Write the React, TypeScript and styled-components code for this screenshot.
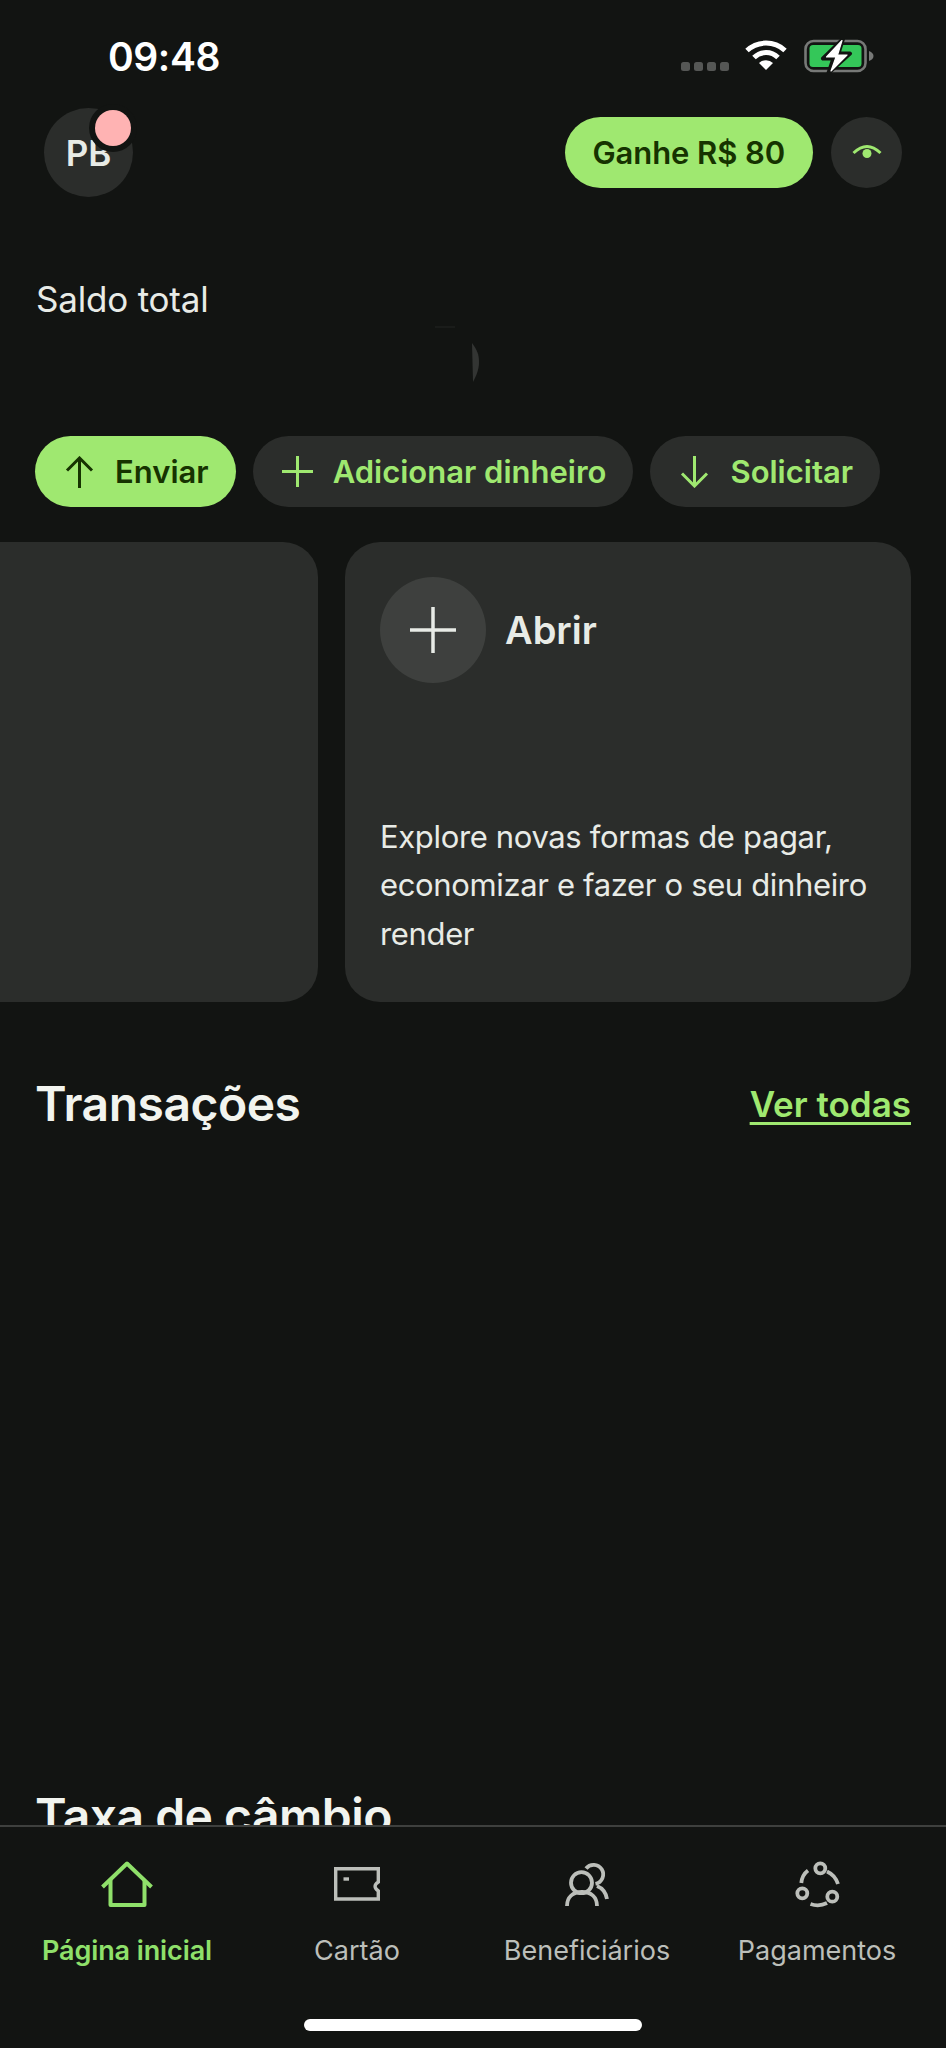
import React from "react";
import styled, { createGlobalStyle } from "styled-components";

const BG = "#121412";
const SURFACE = "#2b2d2b";
const GREEN = "#9fe870";
const GREEN_DARK = "#163300";
const TEXT = "#e8ebe6";
const MUTED = "#bcbfba";

const GlobalStyle = createGlobalStyle`
	html, body {
		margin: 0;
		padding: 0;
		background: ${BG};
	}
	* {
		box-sizing: border-box;
	}
`;

const Page = styled.div`
	width: 946px;
	height: 2048px;
	display: flex;
	flex-direction: column;
	overflow: hidden;
	background: ${BG};
	font-family: Inter, "Liberation Sans", sans-serif;
	color: ${TEXT};
`;

const StatusBar = styled.div`
	height: 108px;
	flex: none;
	display: flex;
	align-items: flex-start;
	justify-content: space-between;
	padding: 33px 72px 0 108px;
`;

const Clock = styled.div`
	font-size: 39px;
	line-height: 47px;
	font-weight: 600;
	letter-spacing: -0.4px;
	color: #fff;
`;

const StatusIcons = styled.div`
	display: flex;
	align-items: flex-start;
	margin-top: 6px;
`;

const SignalDots = styled.div`
	display: flex;
	gap: 4px;
	margin: 23px 16px 0 0;
`;

const SignalDot = styled.span`
	width: 9px;
	height: 9px;
	border-radius: 2.5px;
	background: #555755;
`;

const Header = styled.header`
	flex: none;
	display: flex;
	align-items: center;
	justify-content: space-between;
	height: 89px;
	padding: 0 44px;
`;

const Avatar = styled.div`
	position: relative;
	width: 89px;
	height: 89px;
	border-radius: 50%;
	background: ${SURFACE};
	display: flex;
	align-items: center;
	justify-content: center;
	font-size: 35px;
	font-weight: 600;
	color: ${TEXT};
`;

const NotificationDot = styled.span`
	position: absolute;
	top: 2px;
	right: 2px;
	width: 36px;
	height: 36px;
	border-radius: 50%;
	background: #ffb3b3;
	box-shadow: 0 0 0 6px ${BG};
`;

const HeaderActions = styled.div`
	display: flex;
	align-items: center;
	gap: 18px;
`;

const Pill = styled.button<{ $primary?: boolean }>`
	flex: none;
	display: inline-flex;
	align-items: center;
	height: 71px;
	border: 0;
	border-radius: 36px;
	font-family: inherit;
	font-size: 31px;
	font-weight: 600;
	white-space: nowrap;
	background: ${({ $primary }) => ($primary ? GREEN : SURFACE)};
	color: ${({ $primary }) => ($primary ? GREEN_DARK : GREEN)};
`;

const InviteButton = styled(Pill)`
	padding: 0 28px;
	letter-spacing: -0.1px;
`;

const ActionButton = styled(Pill)`
	gap: 20px;
	padding: 0 27px 0 29px;
`;

const EyeButton = styled.button`
	width: 71px;
	height: 71px;
	border: 0;
	padding: 0;
	border-radius: 50%;
	background: ${SURFACE};
	display: flex;
	align-items: center;
	justify-content: center;
`;

const Main = styled.main`
	flex: 1;
	min-height: 0;
	overflow: hidden;
	padding-top: 82px;
`;

const BalanceLabel = styled.div`
	padding: 0 36px;
	font-size: 35px;
	line-height: 41px;
	font-weight: 400;
	letter-spacing: -0.2px;
`;

const BalanceGhost = styled.svg`
	display: block;
	margin: 6px 0 0 434px;
`;

const ActionRow = styled.div`
	display: flex;
	gap: 17px;
	padding: 0 35px;
	margin-top: 52px;
`;

const CardRow = styled.div`
	display: flex;
	justify-content: flex-end;
	gap: 27px;
	padding-right: 35px;
	margin-top: 35px;
`;

const Card = styled.div`
	flex: none;
	width: 566px;
	height: 460px;
	border-radius: 35px;
	background: ${SURFACE};
	padding: 35px 35px;
	display: flex;
	flex-direction: column;
	justify-content: space-between;
`;

const CardHead = styled.div`
	display: flex;
	align-items: center;
	gap: 19px;
`;

const CardIcon = styled.div`
	width: 106px;
	height: 106px;
	border-radius: 50%;
	background: #3e403e;
	display: flex;
	align-items: center;
	justify-content: center;
`;

const CardTitle = styled.div`
	font-size: 38px;
	font-weight: 600;
	color: ${TEXT};
`;

const CardText = styled.p`
	margin: 0 0 9px;
	font-size: 31px;
	line-height: 48.5px;
	font-weight: 400;
	letter-spacing: -0.35px;
	white-space: nowrap;
	color: ${TEXT};
`;

const SectionHead = styled.div`
	display: flex;
	align-items: flex-start;
	justify-content: space-between;
	padding: 0 35px;
	margin-top: 73px;
`;

const SectionTitle = styled.h2`
	margin: 0;
	font-size: 48px;
	line-height: 58px;
	font-weight: 600;
	letter-spacing: -0.5px;
	color: #f2f4ef;
`;

const ViewAll = styled.a`
	margin-top: 8px;
	font-size: 35px;
	line-height: 42px;
	font-weight: 600;
	color: ${GREEN};
	text-decoration: underline;
	text-decoration-thickness: 3px;
	text-underline-offset: 5px;
`;

const RateSection = styled.section`
	padding: 0 35px;
	margin-top: 654px;
`;

const Nav = styled.nav`
	flex: none;
	height: 223px;
	border-top: 2px solid #3e403e;
	background: ${BG};
	padding: 0 12px;
	position: relative;
	display: grid;
	grid-template-columns: repeat(4, 230px);
	align-items: start;
`;

const NavItem = styled.div<{ $active?: boolean }>`
	display: flex;
	flex-direction: column;
	align-items: center;
	padding-top: 33px;
	font-size: 27px;
	line-height: 34px;
	font-weight: ${({ $active }) => ($active ? 600 : 400)};
	letter-spacing: ${({ $active }) => ($active ? "-0.1px" : "0")};
	color: ${({ $active }) => ($active ? "#8fe06a" : MUTED)};
	white-space: nowrap;
`;

const NavIconBox = styled.div`
	flex: none;
	height: 48px;
	margin-bottom: 26px;
	display: flex;
	align-items: center;
`;

const HomeBar = styled.div`
	position: absolute;
	left: 304px;
	bottom: 17px;
	width: 338px;
	height: 12px;
	border-radius: 6px;
	background: #fff;
`;

const WifiIcon = () => (
	<svg width="42" height="32" viewBox="0 0 42 32" fill="none" style={{ display: "block" }}>
		<path d="M2 11.5 A28 28 0 0 1 40 11.5" stroke="#fff" strokeWidth="5" />
		<path d="M9 18.5 A17 17 0 0 1 33 18.5" stroke="#fff" strokeWidth="5" />
		<path d="M21 31 L14 24 A10 10 0 0 1 28 24 Z" fill="#fff" />
	</svg>
);

const BatteryIcon = () => (
	<svg width="70" height="34" viewBox="0 0 70 34" fill="none" style={{ display: "block", marginLeft: 17 }}>
		<rect x="1.5" y="2" width="60" height="30" rx="8" stroke="#777977" strokeWidth="2.6" />
		<rect x="5.5" y="6" width="52" height="22" rx="3.5" fill="#34c759" />
		<path d="M65 12 C68 13 69.5 15 69.5 17 C69.5 19 68 21 65 22 Z" fill="#777977" />
		<path d="M39 0 L19 19.5 H29.5 L24.5 34 L46 14.5 H34.5 Z" fill={BG} stroke={BG} strokeWidth="4" strokeLinejoin="round" />
		<path d="M38 1.5 L22.5 18 H32 L27 32 L43 16 H33.5 Z" fill="#fff" stroke="#fff" strokeWidth="1.2" strokeLinejoin="round" />
	</svg>
);

const EyeIcon = () => (
	<svg width="30" height="18" viewBox="0 0 30 18" fill="none">
		<path d="M1.5 9 Q15 -4 28.5 9" stroke={GREEN} strokeWidth="3" />
		<circle cx="15" cy="9.5" r="4.5" fill={GREEN} />
	</svg>
);

const ArrowUp = ({ color }: { color: string }) => (
	<svg width="31" height="32" viewBox="0 0 31 32" fill="none" stroke={color} strokeWidth="3">
		<path d="M15.5 32 V2 M3 14.5 L15.5 2 L28 14.5" />
	</svg>
);

const ArrowDown = ({ color }: { color: string }) => (
	<svg width="31" height="32" viewBox="0 0 31 32" fill="none" stroke={color} strokeWidth="3">
		<path d="M15.5 0 V30 M3 17.5 L15.5 30 L28 17.5" />
	</svg>
);

const PlusIcon = ({ color, size, width }: { color: string; size: number; width: number }) => (
	<svg width={size} height={size} viewBox={`0 0 ${size} ${size}`} fill="none" stroke={color} strokeWidth={width}>
		<path d={`M${size / 2} 0 V${size} M0 ${size / 2} H${size}`} />
	</svg>
);

const HomeIcon = () => (
	<svg width="52" height="46" viewBox="0 0 52 46" fill="none" stroke="#8fe06a" strokeWidth="4" strokeLinejoin="round">
		<path d="M1.5 26 L26 2.5 L50.5 26" />
		<path d="M9.5 19 V44 H43.5 V19" />
	</svg>
);

const CardNavIcon = () => (
	<svg width="46" height="34" viewBox="0 0 46 34" fill="none" stroke={MUTED} strokeWidth="3.4">
		<path d="M1.7 1.7 H44.3 V15 C40 17.5 40 21 44.3 24 V32 H1.7 Z" />
		<path d="M9.5 12 H15" />
	</svg>
);

const PeopleIcon = () => (
	<svg width="46" height="46" viewBox="0 0 46 46" fill="none" stroke={MUTED} strokeWidth="3.8">
		<circle cx="17.5" cy="21.7" r="10.5" />
		<path d="M22 7.5 A9.6 9.6 0 1 1 31.5 22.8" />
		<path d="M3 45 C3 36 9 31 18 31 C27 31 33 36 33 45" />
		<path d="M33 25 C38 27 42 32 43 38" />
	</svg>
);

const PaymentsIcon = () => (
	<svg width="48" height="48" viewBox="0 0 48 48" fill="none" stroke={MUTED} strokeWidth="3.8">
		<circle cx="27.3" cy="8.3" r="5" />
		<circle cx="9.3" cy="33.3" r="5" />
		<circle cx="39.3" cy="36.7" r="5" />
		<path d="M34 11.5 Q42 15 45 24" />
		<path d="M15 10.5 Q9 15 8.3 23" />
		<path d="M17.5 44 Q26 47 34 43" />
	</svg>
);

const navItems = [
	{ label: "Página inicial", icon: <HomeIcon />, active: true },
	{ label: "Cartão", icon: <CardNavIcon /> },
	{ label: "Beneficiários", icon: <PeopleIcon /> },
	{ label: "Pagamentos", icon: <PaymentsIcon /> },
];

const App = () => (
	<Page>
		<GlobalStyle />
		<StatusBar>
			<Clock>09:48</Clock>
			<StatusIcons>
				<SignalDots>
					<SignalDot />
					<SignalDot />
					<SignalDot />
					<SignalDot />
				</SignalDots>
				<WifiIcon />
				<BatteryIcon />
			</StatusIcons>
		</StatusBar>
		<Header>
			<Avatar>
				PB
				<NotificationDot />
			</Avatar>
			<HeaderActions>
				<InviteButton $primary>Ganhe R$ 80</InviteButton>
				<EyeButton>
					<EyeIcon />
				</EyeButton>
			</HeaderActions>
		</Header>
		<Main>
			<BalanceLabel>Saldo total</BalanceLabel>
			<BalanceGhost width="48" height="58" viewBox="0 0 48 58" fill="none">
				<path d="M1 1 H21" stroke="#222422" strokeWidth="1" />
				<path d="M38 17 C43 24 45 28 45 36 C45 44 42 50 39 56 Z" fill="#333533" />
			</BalanceGhost>
			<ActionRow>
				<ActionButton $primary>
					<ArrowUp color={GREEN_DARK} />
					Enviar
				</ActionButton>
				<ActionButton>
					<PlusIcon color={GREEN} size={31} width={3} />
					Adicionar dinheiro
				</ActionButton>
				<ActionButton>
					<ArrowDown color={GREEN} />
					Solicitar
				</ActionButton>
			</ActionRow>
			<CardRow>
				<Card />
				<Card>
					<CardHead>
						<CardIcon>
							<PlusIcon color={TEXT} size={46} width={3.5} />
						</CardIcon>
						<CardTitle>Abrir</CardTitle>
					</CardHead>
					<CardText>
						Explore novas formas de pagar,
						<br />
						economizar e fazer o seu dinheiro
						<br />
						render
					</CardText>
				</Card>
			</CardRow>
			<SectionHead>
				<SectionTitle>Transações</SectionTitle>
				<ViewAll>Ver todas</ViewAll>
			</SectionHead>
			<RateSection>
				<SectionTitle>Taxa de câmbio</SectionTitle>
			</RateSection>
		</Main>
		<Nav>
			{navItems.map(item => (
				<NavItem key={item.label} $active={item.active}>
					<NavIconBox>{item.icon}</NavIconBox>
					{item.label}
				</NavItem>
			))}
			<HomeBar />
		</Nav>
	</Page>
);

export default App;
